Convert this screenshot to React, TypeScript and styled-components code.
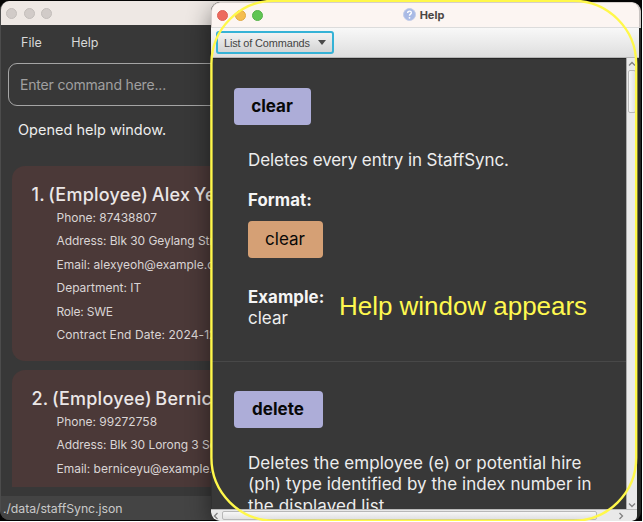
import React from 'react';
import styled, { createGlobalStyle } from 'styled-components';

const GlobalStyle = createGlobalStyle`
  * { box-sizing: border-box; }
  body { margin: 0; background: #fff; overflow: hidden; font-family: Inter, sans-serif; }
`;

const Desktop = styled.main`
  position: relative;
  width: 642px;
  height: 521px;
  background: #050505;
  overflow: hidden;
  white-space: nowrap;
`;

const MainWindow = styled.section`
  position: absolute;
  left: 0;
  top: 1px;
  width: 300px;
  height: 519px;
  display: flex;
  flex-direction: column;
  background: #383838;
  border-left: 1px solid #4c4c4c;
  border-radius: 9px 0 0 9px;
  overflow: hidden;
`;

const MainTitleBar = styled.header`
  height: 24px;
  flex: none;
  display: flex;
  align-items: center;
  gap: 6.5px;
  padding-left: 6px;
  margin-left: -1px;
  background: #eee8e4;
`;

const Light = styled.i<{ $fill: string; $edge: string }>`
  width: 11px;
  height: 11px;
  border-radius: 50%;
  background: ${p => p.$fill};
  border: 1px solid ${p => p.$edge};
`;

const MenuBar = styled.nav`
  display: flex;
  gap: 29.5px;
  height: 38px;
  flex: none;
  padding: 10px 0 0 20px;
  font-size: 12.5px;
  line-height: 16px;
  color: #d9d9d9;
`;

const CommandInput = styled.div`
  height: 43px;
  flex: none;
  margin-left: 7px;
  padding: 13px 0 0 11px;
  border: 1px solid #a5a5a5;
  border-radius: 9px;
  font-size: 14px;
  line-height: 16px;
  letter-spacing: -0.18px;
  color: #a0a0a0;
`;

const ResultText = styled.p`
  height: 60px;
  flex: none;
  margin: 0;
  padding: 15px 0 0 17px;
  font-size: 14.5px;
  line-height: 18px;
  color: #ededed;
`;

const CardList = styled.div`
  height: 321px;
  flex: none;
  display: flex;
  flex-direction: column;
  gap: 9px;
  padding-left: 11px;
  overflow: hidden;
`;

const Card = styled.article`
  height: 195px;
  flex: none;
  padding: 17px 0 0 19.5px;
  border-radius: 13px;
  background: #4b3938;
`;

const CardTitle = styled.h2`
  margin: 0;
  font-size: 18px;
  line-height: 23px;
  font-weight: 500;
  letter-spacing: 0.25px;
  word-spacing: -1.5px;
  color: #ebe7e7;
`;

const Detail = styled.p<{ $spacing?: number }>`
  margin: 0 0 0 25px;
  height: 23.4px;
  font-size: 12px;
  line-height: 23.4px;
  letter-spacing: ${p => p.$spacing ?? 0}px;
  color: #dad5d5;
`;

const StatusBar = styled.footer`
  margin-top: 9px;
  flex: 1;
  padding: 4px 0 0 2px;
  background: #444;
  font-size: 12.3px;
  line-height: 17px;
  letter-spacing: -0.06px;
  color: #c9c9c9;
`;

const HelpWindow = styled.section`
  position: absolute;
  left: 211px;
  top: 2px;
  width: 430px;
  height: 519px;
  display: flex;
  flex-direction: column;
  border-radius: 9px;
  background: #252725;
  box-shadow: 0 8px 24px rgba(0, 0, 0, 0.48);
  overflow: hidden;
`;

const HelpTitleBar = styled.header`
  height: 26px;
  flex: none;
  display: grid;
  grid-template-columns: 1fr auto 1fr;
  align-items: center;
  padding-left: 6px;
  border: 1px solid #d5cecb;
  border-right: 2px solid #c9c4c2;
  border-bottom-color: #dcdcdc;
  border-radius: 9px 9px 0 0;
  background: #fcf5f2;
`;

const Lights = styled.div`
  display: flex;
  gap: 6.5px;
  margin-left: -1px;
`;

const TitleText = styled.div`
  display: flex;
  align-items: center;
  gap: 4px;
  margin-left: -10px;
  padding-bottom: 1px;
  font-size: 11px;
  font-weight: 700;
  color: #4a4644;
`;

const Toolbar = styled.div`
  width: 428px;
  height: 30px;
  flex: none;
  padding: 3px 0 0 5px;
  background: linear-gradient(#f8f8f8, #dedede);
  border-bottom: 1px solid #b5b5b5;
`;

const Combo = styled.div`
  width: 118px;
  height: 23px;
  display: flex;
  align-items: center;
  gap: 8px;
  padding-left: 6px;
  border: 2px solid #35b2d6;
  border-radius: 3px;
  background: linear-gradient(#f2f2f2, #d4d4d4);
  font: 10.9px 'Liberation Sans', sans-serif;
  letter-spacing: -0.12px;
  color: #444;
`;

const Triangle = styled.i`
  border: 4px solid transparent;
  border-top: 5px solid #4a4a4a;
  border-bottom: 0;
`;

const Body = styled.div`
  flex: 1;
  width: 426px;
  display: grid;
  grid-template-columns: 415px 11px;
  grid-template-rows: 451px 12px;
`;

const Content = styled.div`
  overflow: hidden;
  background: #383838;
  border-top: 1px solid #272727;
  border-left: 1px solid #303030;
`;

const Command = styled.section`
  height: 303px;
  padding: 29px 0 0 22px;
  border-bottom: 1px solid #484848;
`;

const Tag = styled.div<{ $width: number; $tone?: 'format' }>`
  width: ${p => p.$width}px;
  height: 36.5px;
  display: flex;
  align-items: center;
  justify-content: center;
  padding-right: 1px;
  border-radius: 4px;
  background: ${p => (p.$tone ? '#d5a075' : '#adadd8')};
  color: #080808;
  font-size: 17px;
  font-weight: ${p => (p.$tone ? 400 : 700)};
`;

const Details = styled.div`
  padding: 25px 0 0 14px;
  font-size: 17px;
  line-height: 21.5px;
  color: #ededed;
`;

const Line = styled.p<{ $gap?: number; $spacing?: number }>`
  margin: 0 0 ${p => p.$gap ?? 0}px;
  letter-spacing: ${p => p.$spacing ?? 0}px;
`;

const Label = styled.h3<{ $above?: number; $below: number }>`
  margin: ${p => p.$above ?? 0}px 0 ${p => p.$below}px;
  font-size: 16.8px;
  line-height: 20px;
  font-weight: 700;
  letter-spacing: 0.08px;
  color: #f5f5f5;
`;

const VerticalBar = styled.div`
  display: flex;
  flex-direction: column;
  align-items: center;
  justify-content: space-between;
  background: #e9e9e9;
  border-left: 1px solid #aaa;
`;

const TopGroup = styled.div`
  display: flex;
  flex-direction: column;
  align-items: center;
  gap: 2px;
  padding-top: 2px;
`;

const VerticalThumb = styled.div`
  width: 8px;
  height: 43px;
  border: 1px solid #b8b8b8;
  border-radius: 2px;
  background: linear-gradient(90deg, #f7f7f7, #e1e1e1);
`;

const HorizontalBar = styled.div`
  grid-column: 1 / -1;
  display: flex;
  align-items: center;
  padding: 0 12px 0 1px;
  border-top: 1px solid #bbb;
  border-radius: 0 0 5px 8px;
  background: #e9e9e9;
`;

const HorizontalThumb = styled.div`
  width: 375px;
  height: 9px;
  margin: 0 auto 0 2px;
  border: 1px solid #b8b8b8;
  border-radius: 2px;
  background: linear-gradient(#f7f7f7, #e1e1e1);
`;

const Highlight = styled.svg`
  position: absolute;
  inset: 0;
`;

const Caption = styled.div`
  position: absolute;
  left: 339px;
  top: 291px;
  font: 26px/30px 'Liberation Sans', sans-serif;
  letter-spacing: -0.03px;
  color: #fff84f;
`;

const Chevron = ({ turn }: { turn: number }) => (
  <svg width="8" height="8" viewBox="0 0 8 8">
    <path d="M1 5.5 4 2.5 7 5.5" fill="none" stroke="#808080" strokeWidth="1.3" transform={`rotate(${turn} 4 4)`} />
  </svg>
);

const HelpIcon = () => (
  <svg width="13" height="13" viewBox="0 0 13 13">
    <circle cx="6.5" cy="6.5" r="6" fill="#a9bae5" stroke="#c2cce8" />
    <path d="M4.7 5C4.7 2.5 8.4 2.6 8.3 4.9 8.2 6.2 6.5 6.2 6.5 7.8" fill="none" stroke="#fff" strokeWidth="1.4" />
    <circle cx="6.5" cy="9.8" r=".9" fill="#fff" />
  </svg>
);

export default function App() {
  return (
    <>
      <GlobalStyle />
      <Desktop>
        <MainWindow>
          <MainTitleBar>
            {[0, 1, 2].map(i => <Light key={i} $fill="#d1cbc8" $edge="#c2bdba" />)}
          </MainTitleBar>
          <MenuBar><span>File</span><span>Help</span></MenuBar>
          <CommandInput>Enter command here...</CommandInput>
          <ResultText>Opened help window.</ResultText>
          <CardList>
            <Card>
              <CardTitle>1. (Employee) Alex Yeoh</CardTitle>
              <Detail>Phone: 87438807</Detail>
              <Detail $spacing={-0.06}>Address: Blk 30 Geylang Street 29</Detail>
              <Detail>Email: alexyeoh@example.com</Detail>
              <Detail>Department: IT</Detail>
              <Detail $spacing={-0.22}>Role: SWE</Detail>
              <Detail $spacing={0.08}>Contract End Date: 2024-12-31</Detail>
            </Card>
            <Card>
              <CardTitle>2. (Employee) Bernice Yu</CardTitle>
              <Detail>Phone: 99272758</Detail>
              <Detail $spacing={-0.06}>Address: Blk 30 Lorong 3 Serangoon</Detail>
              <Detail>Email: berniceyu@example.com</Detail>
            </Card>
          </CardList>
          <StatusBar>./data/staffSync.json</StatusBar>
        </MainWindow>

        <HelpWindow>
          <HelpTitleBar>
            <Lights>
              <Light $fill="#ed6a5e" $edge="#dd6258" />
              <Light $fill="#f5bd4f" $edge="#dfa943" />
              <Light $fill="#61c554" $edge="#55b24a" />
            </Lights>
            <TitleText><HelpIcon />Help</TitleText>
          </HelpTitleBar>
          <Toolbar><Combo>List of Commands<Triangle /></Combo></Toolbar>
          <Body>
            <Content>
              <Command>
                <Tag $width={77}>clear</Tag>
                <Details>
                  <Line $gap={19} $spacing={-0.08}>Deletes every entry in StaffSync.</Line>
                  <Label $below={11}>Format:</Label>
                  <Tag $width={75} $tone="format">clear</Tag>
                  <Label $above={29} $below={1.5}>Example:</Label>
                  <Line>clear</Line>
                </Details>
              </Command>
              <Command>
                <Tag $width={89}>delete</Tag>
                <Details>
                  <Line $spacing={0.06}>Deletes the employee (e) or potential hire</Line>
                  <Line $spacing={0.05}>(ph) type identified by the index number in</Line>
                  <Line $spacing={0.1}>the displayed list.</Line>
                </Details>
              </Command>
            </Content>
            <VerticalBar>
              <TopGroup><Chevron turn={0} /><VerticalThumb /></TopGroup>
              <Chevron turn={180} />
            </VerticalBar>
            <HorizontalBar>
              <Chevron turn={-90} /><HorizontalThumb /><Chevron turn={90} />
            </HorizontalBar>
          </Body>
        </HelpWindow>

        <Highlight width="642" height="521">
          <rect x="211.4" y="0.8" width="424.8" height="520" rx="63" fill="none" stroke="#fff84a" strokeWidth="2.4" />
        </Highlight>
        <Caption>Help window appears</Caption>
      </Desktop>
    </>
  );
}
